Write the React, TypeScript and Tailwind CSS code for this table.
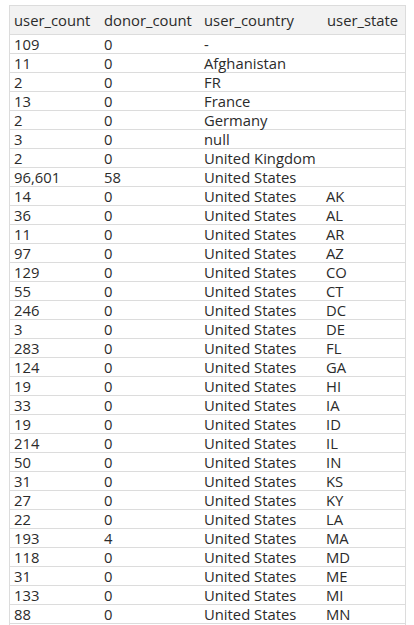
import React from "react";

const rows: [string, string, string, string][] = [
  ["109", "0", "-", ""],
  ["11", "0", "Afghanistan", ""],
  ["2", "0", "FR", ""],
  ["13", "0", "France", ""],
  ["2", "0", "Germany", ""],
  ["3", "0", "null", ""],
  ["2", "0", "United Kingdom", ""],
  ["96,601", "58", "United States", ""],
  ["14", "0", "United States", "AK"],
  ["36", "0", "United States", "AL"],
  ["11", "0", "United States", "AR"],
  ["97", "0", "United States", "AZ"],
  ["129", "0", "United States", "CO"],
  ["55", "0", "United States", "CT"],
  ["246", "0", "United States", "DC"],
  ["3", "0", "United States", "DE"],
  ["283", "0", "United States", "FL"],
  ["124", "0", "United States", "GA"],
  ["19", "0", "United States", "HI"],
  ["33", "0", "United States", "IA"],
  ["19", "0", "United States", "ID"],
  ["214", "0", "United States", "IL"],
  ["50", "0", "United States", "IN"],
  ["31", "0", "United States", "KS"],
  ["27", "0", "United States", "KY"],
  ["22", "0", "United States", "LA"],
  ["193", "4", "United States", "MA"],
  ["118", "0", "United States", "MD"],
  ["31", "0", "United States", "ME"],
  ["133", "0", "United States", "MI"],
  ["88", "0", "United States", "MN"],
];

export default function App() {
  return (
    <div className="w-[414px] h-[625px] overflow-hidden bg-white pl-[9px] pt-[5px] text-[14.8px] text-[#2b2b2b]" style={{ fontFamily: '"Open Sans", sans-serif' }}>
      <div className="w-[397px] border border-[#dcdcdc] pb-[20px]">
        <div className="grid grid-cols-[90px_100px_122px_1fr] h-[29px] items-center bg-[#f2f2f2] border-b border-[#dcdcdc]">
          <div className="pl-[4px]">user_count</div>
          <div className="pl-[4px]">donor_count</div>
          <div className="pl-[4px]">user_country</div>
          <div className="pl-[5px]">user_state</div>
        </div>
        {rows.map((r, i) => (
          <div key={i} className="grid grid-cols-[90px_100px_122px_1fr] h-[19px] items-center border-b border-[#dcdcdc] leading-[18px]">
            <div className="pl-[4px]">{r[0]}</div>
            <div className="pl-[4px]">{r[1]}</div>
            <div className="pl-[4px]">{r[2]}</div>
            <div className="pl-[4px]">{r[3]}</div>
          </div>
        ))}
      </div>
    </div>
  );
}
